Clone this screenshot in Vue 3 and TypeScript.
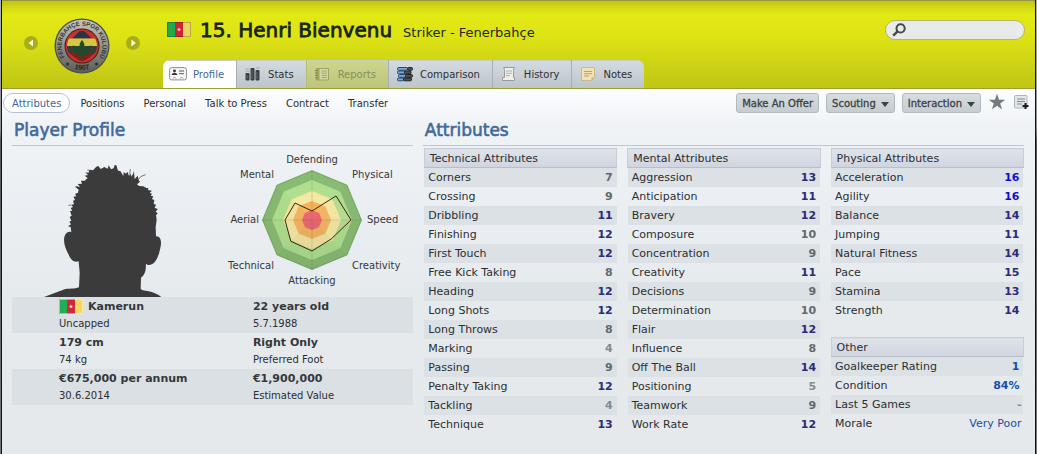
<script setup lang="ts">
import { ref } from 'vue'

type Tone = 'faint' | 'low' | 'good' | 'great' | 'info' | 'dash' | 'plain'
interface Row { name: string; value: string; tone: Tone }
interface Group { title: string; rows: Row[] }

const toneOf = (n: number): Tone => (n >= 16 ? 'great' : n >= 11 ? 'good' : n >= 6 ? 'low' : 'faint')

const makeGroup = (title: string, entries: [string, number][]): Group => ({
  title,
  rows: entries.map(([name, n]) => ({ name, value: String(n), tone: toneOf(n) })),
})

const columns: Group[][] = [
  [
    makeGroup('Technical Attributes', [
      ['Corners', 7], ['Crossing', 9], ['Dribbling', 11], ['Finishing', 12], ['First Touch', 12],
      ['Free Kick Taking', 8], ['Heading', 12], ['Long Shots', 12], ['Long Throws', 8], ['Marking', 4],
      ['Passing', 9], ['Penalty Taking', 12], ['Tackling', 4], ['Technique', 13],
    ]),
  ],
  [
    makeGroup('Mental Attributes', [
      ['Aggression', 13], ['Anticipation', 11], ['Bravery', 12], ['Composure', 10], ['Concentration', 9],
      ['Creativity', 11], ['Decisions', 9], ['Determination', 10], ['Flair', 12], ['Influence', 8],
      ['Off The Ball', 14], ['Positioning', 5], ['Teamwork', 9], ['Work Rate', 12],
    ]),
  ],
  [
    makeGroup('Physical Attributes', [
      ['Acceleration', 16], ['Agility', 16], ['Balance', 14], ['Jumping', 11], ['Natural Fitness', 14],
      ['Pace', 15], ['Stamina', 13], ['Strength', 14],
    ]),
    {
      title: 'Other',
      rows: [
        { name: 'Goalkeeper Rating', value: '1', tone: 'info' },
        { name: 'Condition', value: '84%', tone: 'info' },
        { name: 'Last 5 Games', value: '-', tone: 'dash' },
        { name: 'Morale', value: 'Very Poor', tone: 'plain' },
      ],
    },
  ],
]

const tabs = ['Profile', 'Stats', 'Reports', 'Comparison', 'History', 'Notes']
const sections = ['Attributes', 'Positions', 'Personal', 'Talk to Press', 'Contract', 'Transfer']
const section = ref('Attributes')
const query = ref('')

const facts = [
  { main: 'Kamerun', sub: 'Uncapped', flag: true },
  { main: '22 years old', sub: '5.7.1988', flag: false },
  { main: '179 cm', sub: '74 kg', flag: false },
  { main: 'Right Only', sub: 'Preferred Foot', flag: false },
  { main: '€675,000 per annum', sub: '30.6.2014', flag: false },
  { main: '€1,900,000', sub: 'Estimated Value', flag: false },
]

// Radar chart: octagon corners start at the top and run clockwise.
const corner = (r: number, i: number): string => {
  const a = (Math.PI / 4) * i
  return `${(Math.sin(a) * r).toFixed(2)},${(-Math.cos(a) * r).toFixed(2)}`
}
const octagon = (r: number): string => Array.from({ length: 8 }, (_, i) => corner(r, i)).join(' ')
const rings = [
  { r: 50, fill: '#8abb74' },
  { r: 40, fill: '#b0e08f' },
  { r: 29, fill: '#f5e8a2' },
  { r: 19, fill: '#f4b25a' },
  { r: 10, fill: '#ec5a6c' },
]
const shades = [0, 0.01, 0.05, 0.08, 0.08, 0.05, 0.03, 0]
const skills = [9, 34, 39, 27, 31, 30, 27, 24]
const skillShape = skills.map((r, i) => corner(r, i)).join(' ')
const axes = [
  { label: 'Defending', x: 0, y: -57, anchor: 'middle' },
  { label: 'Physical', x: 40, y: -42, anchor: 'start' },
  { label: 'Speed', x: 55, y: 3, anchor: 'start' },
  { label: 'Creativity', x: 40, y: 49, anchor: 'start' },
  { label: 'Attacking', x: 0, y: 64, anchor: 'middle' },
  { label: 'Technical', x: -38, y: 49, anchor: 'end' },
  { label: 'Aerial', x: -53, y: 3, anchor: 'end' },
  { label: 'Mental', x: -38, y: -42, anchor: 'end' },
]
</script>

<template>
  <div class="window">
    <header class="banner">
      <div class="club">
        <button class="step" aria-label="Previous player">
          <svg viewBox="0 0 14 14" width="14" height="14"><path d="M9 3.6v6.8L4.6 7z" fill="#fbfbe0" /></svg>
        </button>
        <svg class="crest" viewBox="0 0 56 56" width="56" height="56" role="img" aria-label="Club crest">
          <defs>
            <path id="crest-top" d="M12.3 41.2A20.500 20.500 0 1 1 43.700 41.200" />
            <path id="crest-foot" d="M14 47.5A24.4 24.4 0 0 0 42 47.5" />
            <linearGradient id="crest-rim" x1="0" y1="0" x2="0" y2="1">
              <stop offset="0" stop-color="#c4c4bb" /><stop offset="1" stop-color="#5d5e57" />
            </linearGradient>
            <clipPath id="crest-core"><circle cx="28" cy="28" r="15" /></clipPath>
          </defs>
          <circle cx="28" cy="28" r="27.5" fill="#4d4e45" />
          <circle cx="28" cy="28" r="26.2" fill="url(#crest-rim)" />
          <circle cx="28" cy="28" r="17.5" fill="#4a1a18" />
          <circle cx="28" cy="28" r="16.5" fill="#c9322c" />
          <g clip-path="url(#crest-core)">
            <path d="M28 11 38 20.5H18z" fill="#27344a" />
            <path d="M13 20.5h30v7.5H13z" fill="#d3c744" />
            <path d="M13 28h30v7H13z" fill="#3a3f35" />
            <path d="M15 35h26L28 45z" fill="#7c211d" />
          </g>
          <path d="M28 22c3 3.500 3 7 1.300 11 2-3.500 5.200-5.300 8.200-5.500-.3 4.500-3.500 9-8.500 9.500l-.3 4h-1.400l-.3-4c-5-.5-8.200-5-8.500-9.500 3 .2 6.200 2 8.200 5.500C25 29 25 25.500 28 22z" fill="#1f4a2c" />
          <circle cx="13.500" cy="46" r="1.500" fill="#2c2d28" />
          <circle cx="42.500" cy="46" r="1.500" fill="#2c2d28" />
          <text class="crest-text" fill="#33342f"><textPath href="#crest-top" startOffset="50%" text-anchor="middle">FENERBAHÇE SPOR KULÜBÜ</textPath></text>
          <text class="crest-year" fill="#22231f"><textPath href="#crest-foot" startOffset="50%" text-anchor="middle">1907</textPath></text>
        </svg>
        <button class="step" aria-label="Next player">
          <svg viewBox="0 0 14 14" width="14" height="14"><path d="M5.400 3.600v6.800L9.800 7z" fill="#fbfbe0" /></svg>
        </button>
      </div>

      <div class="identity">
        <div class="title">
          <svg class="flag" viewBox="0 0 24 15" width="24" height="15" role="img" aria-label="Cameroon">
            <path d="M0 0h8v15H0z" fill="#1faa50" /><path d="M8 0h8v15H8z" fill="#cf2338" /><path d="M16 0h8v15h-8z" fill="#f0d55c" />
            <path d="M12 5.500l.6 1.300 1.400.1-1.100 1 .4 1.400-1.300-.8-1.300.8.4-1.400-1.100-1 1.400-.1z" fill="#fbe08a" />
            <path d="M.5.5h23v14H.5z" fill="none" stroke="#000" stroke-opacity=".22" />
          </svg>
          <h1>15. Henri Bienvenu</h1>
          <span class="role">Striker - Fenerbahçe</span>
        </div>
        <nav class="tabs" aria-label="Player pages">
          <button v-for="tab in tabs" :key="tab" class="tab" :class="{ active: tab === 'Profile', muted: tab === 'Reports' }" :disabled="tab === 'Reports'">
            <svg viewBox="0 0 18 16" width="18" height="16" aria-hidden="true">
              <g v-if="tab === 'Profile'">
                <rect x=".6" y="1.600" width="16.800" height="12.300" rx="2" fill="#f6f6f6" stroke="#8b8f92" />
                <circle cx="5.500" cy="5" r="1.400" fill="#333" /><path d="M2.800 9V8l1.700-1h2l1.700 1v1z" fill="#333" />
                <path d="M10 5h5M10 7.700h5" stroke="#555" /><path d="M4 12.500l1.500-1.500L7 12.500M11 12.500l1.500-1.500 1.500 1.500" fill="none" stroke="#8b8f92" />
              </g>
              <g v-else-if="tab === 'Stats'">
                <rect x="1.500" y="7" width="4" height="7.500" rx="1" fill="#3a3e42" /><rect x="6.500" y="2" width="4" height="12.500" rx="1" fill="#3a3e42" /><rect x="11.500" y="4" width="4" height="10.500" rx="1" fill="#3a3e42" />
                <path d="M3 9v4M8 4v9M13 6v7" stroke="#5f666c" />
                <path d="M1.500 3h4M1.500 5.200h4M12 2h4" stroke="#a4acb2" />
              </g>
              <g v-else-if="tab === 'Reports'">
                <path d="M2.500 2.500h12v11.500h-12z" fill="#d3d9a6" stroke="#9da45f" /><path d="M2.500 2.500h3v11.500h-3z" fill="#9da35e" />
                <path d="M7.500 5h5.500M7.500 7.200h5.500M7.500 9.400h5.500M7.500 11.600h5.500" stroke="#9fa56a" /><path d="M1 4.500h2M1 7h2M1 9.500h2M1 12h2" stroke="#7c8243" />
              </g>
              <g v-else-if="tab === 'Comparison'">
                <rect x="1.500" y="1.500" width="10" height="2.800" rx="1" fill="#78a9d8" stroke="#2b4865" /><rect x="11.500" y="1.500" width="5" height="2.800" rx="1" fill="#4d5155" stroke="#222" />
                <rect x="1.500" y="5" width="7" height="2.800" rx="1" fill="#78a9d8" stroke="#2b4865" /><rect x="8.500" y="5" width="6.500" height="2.800" rx="1" fill="#4d5155" stroke="#222" />
                <rect x="2.500" y="8.500" width="8" height="2.800" rx="1" fill="#78a9d8" stroke="#2b4865" /><rect x="9.500" y="8.500" width="7" height="2.800" rx="1" fill="#4d5155" stroke="#222" />
                <rect x="1.500" y="12" width="6" height="2.800" rx="1" fill="#78a9d8" stroke="#2b4865" /><rect x="7.500" y="12" width="8" height="2.800" rx="1" fill="#4d5155" stroke="#222" />
              </g>
              <g v-else-if="tab === 'History'">
                <path d="M3.500 1.500h11q-1 1-1 3v7h1v3h-12v-3h2v-7q0-2-1-3z" fill="#efefec" stroke="#989b9c" />
                <path d="M6 5h6M6 7.300h6M6 9.600h4" stroke="#adb0b2" />
              </g>
              <g v-else>
                <path d="M2.500 1.500h13v10l-3 3h-10z" fill="#f3e2b4" stroke="#c9b88c" /><path d="M15.500 11.500h-3v3z" fill="#c9b37c" />
                <path d="M5 5.500h8M5 7.700h8M5 9.900h5" stroke="#b9a470" />
              </g>
            </svg>
            {{ tab }}
          </button>
        </nav>
      </div>

      <label class="search">
        <svg viewBox="0 0 14 14" width="14" height="14" aria-hidden="true">
          <circle cx="8.600" cy="5.400" r="4.100" fill="none" stroke="#47484a" stroke-width="2" /><path d="M5.600 8.400 1.200 12.600" stroke="#47484a" stroke-width="2.400" />
        </svg>
        <input v-model="query" type="search" aria-label="Search" />
      </label>
    </header>

    <div class="toolbar">
      <nav class="sections" aria-label="Profile sections">
        <button v-for="s in sections" :key="s" class="section" :class="{ current: s === section }" @click="section = s">{{ s }}</button>
      </nav>
      <div class="actions">
        <button class="action">Make An Offer</button>
        <button class="action">Scouting <svg viewBox="0 0 8 5" width="8" height="5"><path d="M0 0h8L4 5z" fill="#3c4144" /></svg></button>
        <button class="action">Interaction <svg viewBox="0 0 8 5" width="8" height="5"><path d="M0 0h8L4 5z" fill="#3c4144" /></svg></button>
        <button class="icon" aria-label="Add to shortlist">
          <svg viewBox="0 0 18 18" width="18" height="18"><path d="M9 .8l2 5.900h6.200l-5 3.700 1.900 6.100L9 12.800l-5.100 3.700 1.900-6.100-5-3.700H7z" fill="#73797e" /></svg>
        </button>
        <button class="icon" aria-label="Add note">
          <svg viewBox="0 0 17 17" width="17" height="17"><rect x="1.500" y="1.500" width="12.500" height="12.500" rx="1" fill="#e3e7e9" stroke="#adb4b8" /><path d="M4 5h8M4 7.500h8M4 10h5" stroke="#80868a" /><path d="M12.500 9v6M9.500 12h6" stroke="#17191b" stroke-width="2" /></svg>
        </button>
      </div>
    </div>

    <main class="content">
      <section>
        <h2>Player Profile</h2>
        <div class="visuals">
          <svg class="portrait" viewBox="132 70 354 402" width="118" height="134" role="img" aria-label="Player portrait">
            <path fill="#3b3b3b" d="M132 472 190 450 C205 445 225 449 237 443 L239 400 236 365 C222 369 212 360 206 345 C195 325 190 308 193 292 C196 280 204 275 214 277 L212 262 204 260 213 254 208 246 214 243 209 232 215 228 210 214 217 213 212 205 219 202 214 196 222 193 219 184 225 180 220 171 229 170 225 163 234 159 236 150 226 142 240 141 233 133 246 132 243 123 254 123 263 115 254 108 264 106 256 98 266 99 268 90 279 92 289 81 295 79 302 88 313 82 323 87 326 77 333 89 341 86 344 76 349 77 354 93 361 94 370 109 371 97 378 102 382 96 387 108 393 102 394 111 401 99 404 118 413 108 416 122 420 126 411 134 417 139 430 140 439 145 445 145 444 151 456 153 449 159 456 162 452 168 460 170 456 178 463 181 461 193 468 195 464 204 474 209 467 215 473 222 468 226 470 240 467 262 468 290 C478 289 484 299 483 313 C479 342 470 368 455 374 C448 377 442 376 438 372 L437 390 C435 400 430 409 423 414 L422 448 C428 456 460 451 484 472z" />
            <path d="M389 104 391 88M402 112 401 96M412 122Q420 108 437 105M268 92 262 91M235 141 226 141M214 196 205 197" fill="none" stroke="#3b3b3b" stroke-width="2" />
          </svg>
          <svg class="radar" viewBox="-88 -70 182 140" width="182" height="140" role="img" aria-label="Player ability chart">
            <polygon v-for="ring in rings" :key="ring.r" :points="octagon(ring.r)" :fill="ring.fill" />
            <polygon v-for="(shade, i) in shades" :key="i" :points="`0,0 ${corner(50, i)} ${corner(50, i + 1)}`" fill="#20402a" :fill-opacity="shade" />
            <polygon :points="octagon(49)" fill="none" stroke="#5b9355" stroke-opacity=".4" />
            <path d="M-50 0H50M0-50V50" stroke="#685c3c" stroke-opacity=".2" />
            <polygon :points="skillShape" fill="#ffd7a8" fill-opacity=".1" stroke="#3a260d" />
            <text v-for="a in axes" :key="a.label" class="axis" :x="a.x" :y="a.y" :text-anchor="a.anchor">{{ a.label }}</text>
          </svg>
        </div>
        <div class="facts">
          <div v-for="fact in facts" :key="fact.main" class="fact">
            <div class="fact-main">
              <svg v-if="fact.flag" viewBox="0 0 24 15" width="24" height="15" aria-hidden="true">
                <path d="M0 0h8v15H0z" fill="#22ad56" /><path d="M8 0h8v15H8z" fill="#cf2740" /><path d="M16 0h8v15h-8z" fill="#f4d75e" />
                <path d="M12 5.500l.6 1.300 1.400.1-1.100 1 .4 1.400-1.300-.8-1.300.8.4-1.400-1.100-1 1.400-.1z" fill="#fbe9a0" />
                <path d="M.5.5h23v14H.5z" fill="none" stroke="#fff" stroke-opacity=".45" />
              </svg>
              {{ fact.main }}
            </div>
            <div class="fact-sub">{{ fact.sub }}</div>
          </div>
        </div>
      </section>

      <section>
        <h2>Attributes</h2>
        <div class="columns">
          <div v-for="(column, c) in columns" :key="c" class="column">
            <table v-for="group in column" :key="group.title">
              <thead><tr><th colspan="2" scope="colgroup">{{ group.title }}</th></tr></thead>
              <tbody>
                <tr v-for="row in group.rows" :key="row.name">
                  <th scope="row">{{ row.name }}</th>
                  <td :class="row.tone">{{ row.value }}</td>
                </tr>
              </tbody>
            </table>
          </div>
        </div>
      </section>
    </main>
  </div>
</template>

<style>
body { margin: 0; background: linear-gradient(#a9b3bd 0, #8d9092 130px, #55585a 140px, #74777a 100%); }
</style>

<style scoped>
* { box-sizing: border-box; }
.window {
  min-height: 100vh; margin: 0 1px; border: solid #101214; border-width: 0 1px;
  background: linear-gradient(#fcfdfe 89px, #f0f3f6 125px, #ebeff3 200px, #e5eaed 300px, #e5e9ec 100%);
  color: #2b2f32; font: 11px "DejaVu Sans", sans-serif;
}
button { margin: 0; padding: 0; border: 0; background: none; font: 10px "DejaVu Sans", sans-serif; color: inherit; }
svg { display: block; flex: none; }
h1, h2 { margin: 0; font-weight: 400; }

.banner {
  display: flex; border-top: 1px solid #96973f; border-bottom: 1px solid #9aa032;
  background: linear-gradient(#bfc216 0, #d9de14 8px, #e3e914 14px, #dde214 38px, #cbd116 66px, #c0c612 100%);
}
.club { display: flex; align-items: center; gap: 16px; padding: 5px 23px 2px 22px; }
.step { margin-bottom: 6px; border-radius: 50%; background: #a8ad19; }
.crest-text { font: 700 6px "Liberation Sans", sans-serif; }
.crest-year { font: 700 7px "Liberation Sans", sans-serif; }
.identity { flex: 1; display: flex; flex-direction: column; }
.title { display: flex; align-items: baseline; height: 59px; padding: 17px 0 0 4px; color: #17241f; white-space: nowrap; }
.flag { align-self: flex-start; margin: 4px 9px 0 0; }
h1 { font-size: 20px; line-height: 24px; -webkit-text-stroke: 0.8px #17241f; }
.role { margin-left: 11px; font-size: 13px; color: #1c2a1c; }
.tabs { display: flex; align-self: flex-start; height: 28px; overflow: hidden; border-radius: 7px 7px 0 0; }
.tab {
  display: flex; align-items: center; gap: 6px; padding: 0 12px 0 7px; border-left: 1px solid #a5afb5;
  background: linear-gradient(#d5dce1, #bcc5cb); color: #2c3033; box-shadow: inset 0 1px #c9d0bd;
}
.tab.active { border-left: 0; padding-left: 6px; background: linear-gradient(#fff, #fcfdfe); color: #3e679c; }
.tab.muted { background: linear-gradient(#ced58d, #bdc57b); color: #878e5c; border-left-color: #b5bd75; }
.search {
  display: flex; align-items: center; gap: 4px; width: 140px; height: 20px; margin: 19px 10px 0 0; padding: 0 8px 0 6px;
  border: 1px solid #b3b66b; border-radius: 10px; background: #e9eaea;
}
.search input { flex: 1; min-width: 0; padding: 0; border: 0; outline: 0; background: none; font: 11px "DejaVu Sans", sans-serif; }

.toolbar { display: flex; justify-content: space-between; padding: 4px 5px 0 1px; }
.sections { display: flex; gap: 1px; }
.section { height: 20px; padding: 0 8px; border: 1px solid transparent; border-radius: 10px; white-space: nowrap; }
.section.current { border-color: #b7bfd2; background: #fff; color: #42669a; }
.actions { display: flex; align-items: flex-start; gap: 7px; }
.action {
  display: flex; align-items: center; gap: 5px; height: 20px; padding: 0 5px; border: 1px solid #b2babf; border-radius: 3px;
  background: linear-gradient(#d7dde0, #c5cdd1); color: #3c4144; -webkit-text-stroke: 0.3px #3c4144; white-space: nowrap;
}
.action svg { margin-top: 2px; }
.icon + .icon { margin-top: 1px; }

.content { display: grid; grid-template-columns: 2fr 3fr; gap: 10px; padding: 0 11px 0 10px; }
h2 {
  padding: 7px 2px 5px; border-bottom: 1px solid #bcc5d2; color: #41699b;
  font-size: 17px; line-height: 20px; -webkit-text-stroke: 0.6px #41699b;
}
.visuals { display: flex; align-items: flex-end; gap: 62px; height: 151px; padding-left: 32px; }
.radar { margin-bottom: 7px; }
.axis { font: 10px "DejaVu Sans", sans-serif; fill: #34383b; }
.facts { display: grid; grid-template-columns: 241fr 160fr; }
.fact { height: 36px; padding-top: 2px; white-space: nowrap; }
.fact:nth-child(odd) { padding-left: 47px; }
.fact:nth-child(4n + 1), .fact:nth-child(4n + 2) { background: #dbe0e4; }
.fact-main { display: flex; gap: 5px; font-size: 11px; font-weight: 700; line-height: 16px; color: #34383a; }
.fact-sub { font-size: 10px; line-height: 18px; }

.columns { display: grid; grid-template-columns: repeat(3, 1fr); gap: 10px; padding: 2px 0 0 1px; }
.column { display: flex; flex-direction: column; gap: 17px; }
table { width: 100%; border-collapse: collapse; }
th, td { height: 19px; padding: 0; line-height: 19px; font-weight: 400; white-space: nowrap; }
thead th {
  padding: 2px 5px 0; border: 1px solid #c7ced9; border-bottom-color: #b6bfca;
  background: linear-gradient(#dfe4ea, #cfd4e0); text-align: left; line-height: 16px;
}
tbody th { padding-left: 4px; text-align: left; }
tbody td { padding-right: 4px; text-align: right; font-weight: 700; }
tbody tr:nth-child(odd) { background: #dbe1e5; }
.faint { color: #858b90; }
.low { color: #63696e; }
.good { color: #2c2b78; }
.great { color: #1010cf; }
.info { color: #1450a8; }
td.dash { padding-right: 2px; color: #6f8fb8; }
td.plain { padding-right: 2px; color: #1450a8; font-weight: 400; }
</style>
